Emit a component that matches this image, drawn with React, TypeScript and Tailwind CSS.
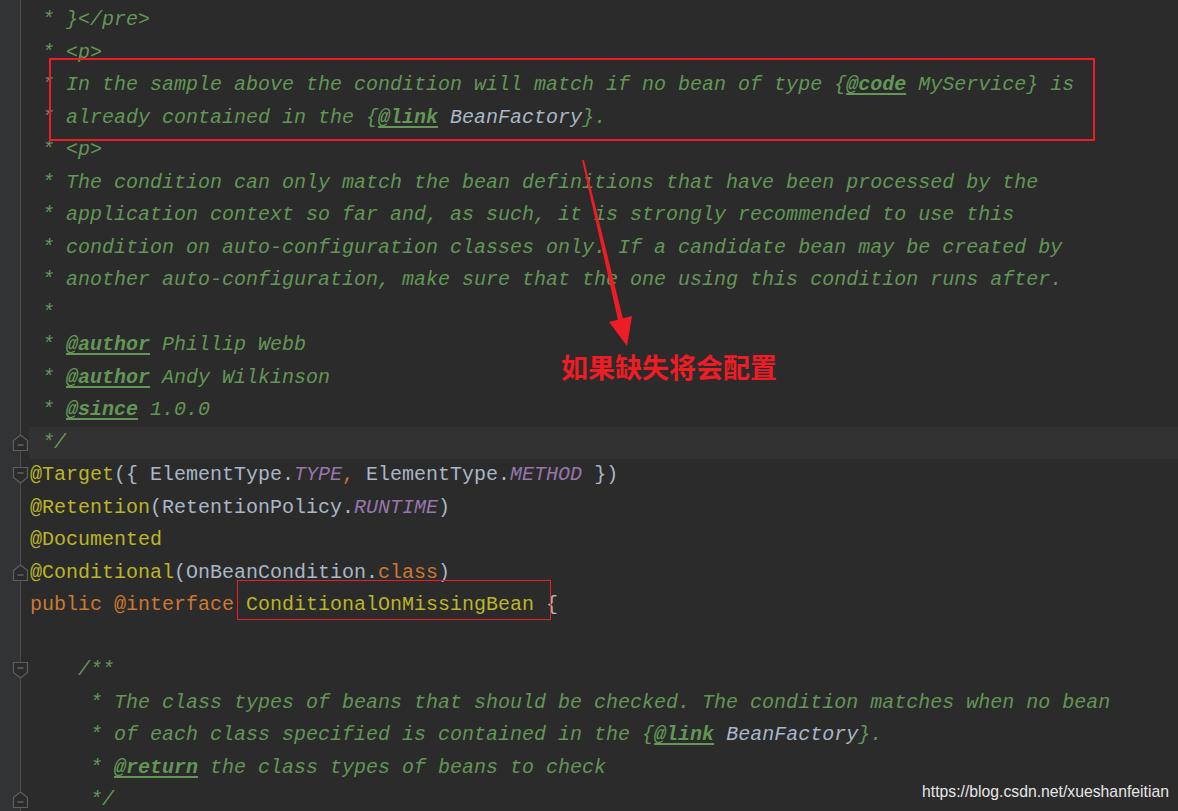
import React from "react";

type Seg = { t: string; c?: string };

const G = "text-[#629755] italic";
const TAG = "text-[#629755] italic font-bold underline underline-offset-[3px]";
const REF = "text-[#a9b7c6] italic";
const ANN = "text-[#bbb529]";
const KW = "text-[#cc7832]";
const TXT = "text-[#a9b7c6]";
const CONST = "text-[#9876aa] italic";

const lines: Seg[][] = [
  [{ t: " * }</pre>", c: G }],
  [{ t: " * <p>", c: G }],
  [
    { t: " * In the sample above the condition will match if no bean of type {", c: G },
    { t: "@code", c: TAG },
    { t: " MyService} is", c: G },
  ],
  [
    { t: " * already contained in the {", c: G },
    { t: "@link", c: TAG },
    { t: " " },
    { t: "BeanFactory", c: REF },
    { t: "}.", c: G },
  ],
  [{ t: " * <p>", c: G }],
  [{ t: " * The condition can only match the bean definitions that have been processed by the", c: G }],
  [{ t: " * application context so far and, as such, it is strongly recommended to use this", c: G }],
  [{ t: " * condition on auto-configuration classes only. If a candidate bean may be created by", c: G }],
  [{ t: " * another auto-configuration, make sure that the one using this condition runs after.", c: G }],
  [{ t: " *", c: G }],
  [{ t: " * ", c: G }, { t: "@author", c: TAG }, { t: " Phillip Webb", c: G }],
  [{ t: " * ", c: G }, { t: "@author", c: TAG }, { t: " Andy Wilkinson", c: G }],
  [{ t: " * ", c: G }, { t: "@since", c: TAG }, { t: " 1.0.0", c: G }],
  [{ t: " */", c: G }],
  [
    { t: "@Target", c: ANN },
    { t: "({ ElementType.", c: TXT },
    { t: "TYPE", c: CONST },
    { t: ", ", c: KW },
    { t: "ElementType.", c: TXT },
    { t: "METHOD", c: CONST },
    { t: " })", c: TXT },
  ],
  [
    { t: "@Retention", c: ANN },
    { t: "(RetentionPolicy.", c: TXT },
    { t: "RUNTIME", c: CONST },
    { t: ")", c: TXT },
  ],
  [{ t: "@Documented", c: ANN }],
  [
    { t: "@Conditional", c: ANN },
    { t: "(OnBeanCondition.", c: TXT },
    { t: "class", c: KW },
    { t: ")", c: TXT },
  ],
  [
    { t: "public @interface ", c: KW },
    { t: "ConditionalOnMissingBean", c: ANN },
    { t: " {", c: TXT },
  ],
  [],
  [{ t: "    /**", c: G }],
  [{ t: "     * The class types of beans that should be checked. The condition matches when no bean", c: G }],
  [
    { t: "     * of each class specified is contained in the {", c: G },
    { t: "@link", c: TAG },
    { t: " " },
    { t: "BeanFactory", c: REF },
    { t: "}.", c: G },
  ],
  [{ t: "     * ", c: G }, { t: "@return", c: TAG }, { t: " the class types of beans to check", c: G }],
  [{ t: "     */", c: G }],
];

// fold markers: line index -> direction
const folds: Record<number, boolean> = { 13: true, 14: false, 17: true, 20: false, 24: true };

const FoldMark = ({ up }: { up: boolean }) => (
  <svg width="17" height="18" viewBox="0 0 17 18" className="block">
    {up ? (
      <path d="M1.5 6.5 L8.5 1 L15.5 6.5 V16.5 H1.5 Z" fill="#2b2b2b" stroke="#5e6060" strokeWidth="1.2" />
    ) : (
      <path d="M1.5 1.5 H15.5 V11.5 L8.5 17 L1.5 11.5 Z" fill="#2b2b2b" stroke="#5e6060" strokeWidth="1.2" />
    )}
    <path d={up ? "M5.5 11 H11.5" : "M5.5 7 H11.5"} stroke="#6e7070" strokeWidth="1.2" />
  </svg>
);

const App = () => {
  return (
    <div className="relative w-[1178px] h-[811px] overflow-hidden bg-[#2b2b2b] font-['Liberation_Mono',monospace] text-[20px]">
      <div className="pt-[4px]">
        {lines.map((segs, i) => (
          <div key={i} className="flex h-[32.5px]">
            {/* gutter cell */}
            <div className="relative w-[29px] shrink-0 flex">
              <div className="w-[21px] bg-[#313335] border-r border-[#4a4b4c]" />
              {i in folds && (
                <div className="absolute left-[12px] top-[7px]">
                  <FoldMark up={folds[i]} />
                </div>
              )}
            </div>
            <div
              className={`flex-1 leading-[32.5px] whitespace-pre pl-[1px] ${i === 13 ? "bg-[#323232]" : ""}`}
            >
              {segs.map((s, j) => (
                <span key={j} className={s.c}>
                  {s.t}
                </span>
              ))}
            </div>
          </div>
        ))}
      </div>

      {/* top strip of gutter above first row */}
      <div className="absolute left-0 top-0 w-[21px] h-[4px] bg-[#313335] border-r border-[#4a4b4c]" />

      {/* red annotation boxes */}
      <div className="absolute left-[49px] top-[58px] w-[1046px] h-[83px] border-2 border-[#ee1c25]" />
      <div className="absolute left-[237px] top-[580px] w-[314px] h-[40px] border-[1.5px] border-[#ee1c25]" />

      {/* arrow */}
      <svg className="absolute inset-0 pointer-events-none" width="1178" height="811">
        <polygon points="582,160 584,160 623,319 618,320" fill="#ee1c25" />
        <polygon points="609,322 632,316 627,346" fill="#ee1c25" />
      </svg>

      <div className="absolute left-[561px] top-[350px] text-[27px] leading-[34px] font-bold text-[#ee1c25] font-['Noto_Sans_CJK_SC',sans-serif]">
        如果缺失将会配置
      </div>

      <div className="absolute left-[922px] top-[781px] text-[15.75px] leading-[22px] text-[#e6e6e6] font-['Liberation_Sans',Arial,sans-serif]">
        https://blog.csdn.net/xueshanfeitian
      </div>
    </div>
  );
};

export default App;
